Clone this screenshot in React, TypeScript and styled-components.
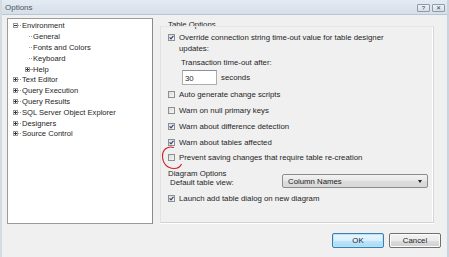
import React from "react";
import styled, { createGlobalStyle } from "styled-components";

const Global = createGlobalStyle`
  html, body { margin: 0; padding: 0; }
  body {
    width: 449px; height: 257px; overflow: hidden;
    background: #f0f0f0;
    font-family: "Liberation Sans", Arial, sans-serif;
    font-size: 7.8px;
    color: #1e1e1e;
  }
`;

const Window = styled.div`
  position: relative;
  width: 449px;
  height: 257px;
  box-sizing: border-box;
  border-left: 2px solid #d3dbe3;
  border-right: 2px solid #c9d3dd;
  background: #f0f0f0;
  display: flex;
  flex-direction: column;
  overflow: hidden;
`;

const TitleBar = styled.div`
  height: 14px;
  flex: none;
  display: flex;
  align-items: center;
  justify-content: space-between;
  padding: 0 2px 0 3px;
  background: linear-gradient(#e4ebf2, #d5dfe9);
  border-bottom: 1px solid #b9c6d3;
`;

const Title = styled.span`
  font-size: 8px;
  color: #4a5561;
`;

const TitleButtons = styled.div`
  display: flex;
  gap: 2px;
  margin-top: 1px;
`;

const TitleButton = styled.div`
  width: 13px;
  height: 8px;
  box-sizing: border-box;
  border: 1px solid #8d9aa8;
  border-radius: 1px;
  background: linear-gradient(#eef2f6, #d6dee7);
  display: flex;
  align-items: center;
  justify-content: center;
  font-size: 6px;
  color: #3c4652;
  line-height: 1;
`;

const Body = styled.div`
  flex: 1;
  display: flex;
  padding: 3px 0 0 5px;
  gap: 7px;
`;

const TreePanel = styled.div`
  width: 146px;
  height: 206px;
  box-sizing: border-box;
  border: 1px solid #9b9b9b;
  border-right-color: #8a8a8a;
  background: #fff;
  padding-top: 1.5px;
  flex: none;
  font-size: 7.6px;
`;

const TreeRow = styled.div<{ $level: number }>`
  height: 10.8px;
  display: flex;
  align-items: center;
  padding-left: ${(p) => 5 + p.$level * 12}px;
  white-space: nowrap;
`;

const Expander = styled.span`
  width: 5px;
  height: 5px;
  box-sizing: border-box;
  border: 1px solid #9a9a9a;
  position: relative;
  flex: none;
  background: #fff;
  &::before {
    content: "";
    position: absolute;
    left: 0;
    top: 1px;
    width: 3px;
    height: 1px;
    background: #333;
  }
`;

const ExpanderPlus = styled(Expander)`
  &::after {
    content: "";
    position: absolute;
    left: 1px;
    top: 0;
    width: 1px;
    height: 3px;
    background: #333;
  }
`;

const Dash = styled.span<{ $w: number }>`
  width: ${(p) => p.$w}px;
  border-top: 1px dotted #a0a0a0;
  margin: 0 1px 0 0;
  flex: none;
`;

const Spacer = styled.span`
  width: 4px;
  flex: none;
`;

const RightArea = styled.div`
  flex: 1;
  display: flex;
  flex-direction: column;
`;

const SectionTitle = styled.div`
  height: 9px;
  line-height: 9px;
  padding-left: 8px;
  margin-top: 2px;
`;

const OptionsPanel = styled.div`
  width: 274px;
  height: 197px;
  box-sizing: border-box;
  margin-top: -3px;
  border-top: 1px solid #e6e6e6;
  border-right: 1px solid #d6d6d6;
  border-bottom: 1px solid #d2d2d2;
  border-left: 1px solid #e2e2e2;
  box-shadow: inset -1px 0 0 #fff, 0 1px 0 #fff;
  padding: 4.5px 0 0 7px;
  display: flex;
  flex-direction: column;
`;

const CheckRow = styled.label<{ $mt?: number }>`
  display: flex;
  align-items: flex-start;
  gap: 4px;
  margin-top: ${(p) => p.$mt ?? 0}px;
  line-height: 11px;
`;

const Box = styled.span`
  width: 7px;
  height: 7px;
  margin-top: 2px;
  box-sizing: border-box;
  border: 1px solid #8e8f8f;
  background: linear-gradient(135deg, #dcdcdc, #f6f6f6);
  flex: none;
  display: flex;
  align-items: center;
  justify-content: center;
`;

const CheckText = styled.span`
  width: 214px;
`;

const SubLabel = styled.div`
  padding-left: 13px;
  margin-top: 4.5px;
  line-height: 10px;
`;

const InputRow = styled.div`
  display: flex;
  align-items: center;
  gap: 4px;
  padding-left: 14px;
  margin-top: 2px;
`;

const TextInput = styled.div`
  width: 35px;
  height: 15px;
  box-sizing: border-box;
  border: 1px solid #abadb3;
  border-top-color: #8c8f96;
  background: #fff;
  padding: 2.5px 0 0 2px;
  line-height: 9px;
`;

const GroupLabel = styled.div`
  margin-top: 6px;
  line-height: 9px;
`;

const ViewRow = styled.div`
  display: flex;
  align-items: center;
  justify-content: space-between;
  padding-left: 2px;
  padding-right: 5px;
  margin-top: -3.5px;
`;

const ViewLabel = styled.span`
  padding-top: 2px;
`;

const Combo = styled.div`
  width: 146px;
  height: 14px;
  box-sizing: border-box;
  border: 1px solid #8b8b8b;
  border-radius: 2px;
  background: linear-gradient(#f3f3f3, #e6e6e6 50%, #dcdcdc 51%, #d8d8d8);
  display: flex;
  align-items: center;
  justify-content: space-between;
  padding: 0 5px 0 5px;
`;

const ComboArrow = styled.span`
  width: 0;
  height: 0;
  border-left: 2.5px solid transparent;
  border-right: 2.5px solid transparent;
  border-top: 3px solid #222;
`;

const Footer = styled.div`
  height: 34px;
  flex: none;
  display: flex;
  justify-content: flex-end;
  align-items: flex-start;
  gap: 5px;
  padding: 9px 6px 0 0;
  box-sizing: border-box;
`;

const Button = styled.div<{ $default?: boolean }>`
  width: 52px;
  height: 15px;
  box-sizing: border-box;
  border-radius: 2px;
  border: 1px solid ${(p) => (p.$default ? "#3c7fb1" : "#707070")};
  background: ${(p) =>
    p.$default
      ? "linear-gradient(#eaf6fd, #d9f0fc 50%, #bee6fd 51%, #a7d9f5)"
      : "linear-gradient(#f2f2f2, #ebebeb 50%, #dddddd 51%, #cfcfcf)"};
  box-shadow: inset 0 0 0 1px ${(p) => (p.$default ? "#b9e2f9" : "#fcfcfc")};
  display: flex;
  align-items: center;
  justify-content: center;
  color: #1e1e1e;
`;

const Annotation = styled.svg`
  position: absolute;
  left: 153px;
  top: 144px;
  overflow: visible;
  pointer-events: none;
`;

const CheckMark = () => (
  <svg width="5" height="5" viewBox="0 0 5 5">
    <path d="M0.6 2.4 L2 3.9 L4.4 0.8" fill="none" stroke="#2b3f8a" strokeWidth="1.1" />
  </svg>
);

const Check = ({ checked, mt, children }: { checked?: boolean; mt?: number; children: React.ReactNode }) => (
  <CheckRow $mt={mt}>
    <Box>{checked && <CheckMark />}</Box>
    <CheckText>{children}</CheckText>
  </CheckRow>
);

const tree: { label: string; level: number; kind: "minus" | "plus" | "leaf" }[] = [
  { label: "Environment", level: 0, kind: "minus" },
  { label: "General", level: 1, kind: "leaf" },
  { label: "Fonts and Colors", level: 1, kind: "leaf" },
  { label: "Keyboard", level: 1, kind: "leaf" },
  { label: "Help", level: 1, kind: "plus" },
  { label: "Text Editor", level: 0, kind: "plus" },
  { label: "Query Execution", level: 0, kind: "plus" },
  { label: "Query Results", level: 0, kind: "plus" },
  { label: "SQL Server Object Explorer", level: 0, kind: "plus" },
  { label: "Designers", level: 0, kind: "plus" },
  { label: "Source Control", level: 0, kind: "plus" },
];

const dashWidth = (t: { level: number; kind: string }) =>
  t.kind === "leaf" ? 3 : t.level === 0 ? 3 : 2;

export default function App() {
  return (
    <>
      <Global />
      <Window>
        <TitleBar>
          <Title>Options</Title>
          <TitleButtons>
            <TitleButton>?</TitleButton>
            <TitleButton>✕</TitleButton>
          </TitleButtons>
        </TitleBar>
        <Body>
          <TreePanel>
            {tree.map((t) => (
              <TreeRow key={t.label} $level={t.level}>
                {t.kind === "minus" && <Expander />}
                {t.kind === "plus" && <ExpanderPlus />}
                {t.kind === "leaf" && <Spacer />}
                <Dash $w={dashWidth(t)} />
                <span>{t.label}</span>
              </TreeRow>
            ))}
          </TreePanel>
          <RightArea>
            <SectionTitle>Table Options</SectionTitle>
            <OptionsPanel>
              <Check checked>
                Override connection string time-out value for table designer updates:
              </Check>
              <SubLabel>Transaction time-out after:</SubLabel>
              <InputRow>
                <TextInput>30</TextInput>
                <span>seconds</span>
              </InputRow>
              <Check mt={3.5}>Auto generate change scripts</Check>
              <Check mt={5}>Warn on null primary keys</Check>
              <Check checked mt={5}>Warn about difference detection</Check>
              <Check checked mt={5}>Warn about tables affected</Check>
              <Check mt={4}>Prevent saving changes that require table re-creation</Check>
              <GroupLabel>Diagram Options</GroupLabel>
              <ViewRow>
                <ViewLabel>Default table view:</ViewLabel>
                <Combo>
                  <span>Column Names</span>
                  <ComboArrow />
                </Combo>
              </ViewRow>
              <Check checked mt={4.5}>Launch add table dialog on new diagram</Check>
            </OptionsPanel>
          </RightArea>
        </Body>
        <Footer>
          <Button $default>OK</Button>
          <Button>Cancel</Button>
        </Footer>
        <Annotation width="30" height="30" viewBox="0 0 30 30">
          <path
            d="M19 3.5 C12 1.5 7.5 6 7.5 12 C7.5 19 12 24.5 19 24.5 C23 24.5 25.5 22.5 26.5 20"
            fill="none"
            stroke="#d0202a"
            strokeWidth="1.1"
          />
        </Annotation>
      </Window>
    </>
  );
}
